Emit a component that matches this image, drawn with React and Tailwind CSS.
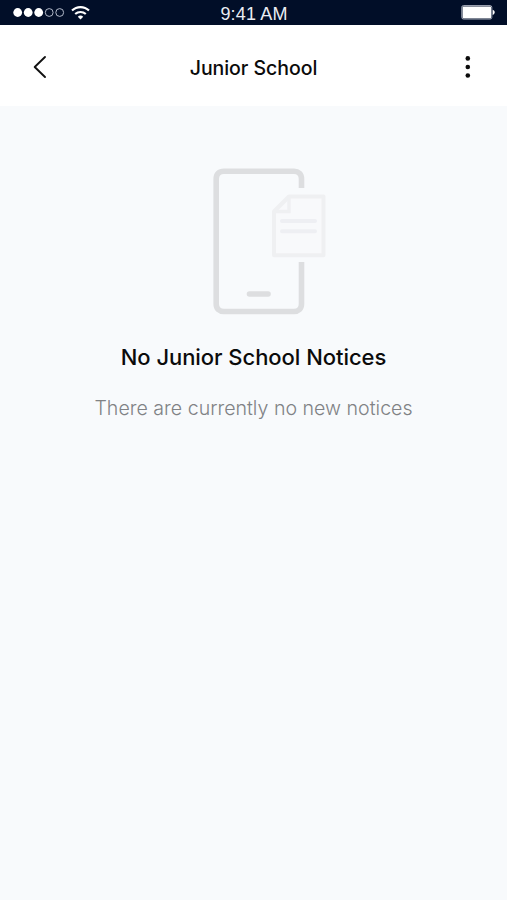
function SignalDots() {
  return (
    <svg width="52" height="11" viewBox="0 0 52 11" fill="white">
      <circle cx="4.7" cy="5.5" r="4.4" />
      <circle cx="15.2" cy="5.5" r="4.4" />
      <circle cx="25.7" cy="5.5" r="4.4" />
      <circle cx="36.2" cy="5.5" r="3.9" fill="none" stroke="#b3bac9" strokeWidth="1" />
      <circle cx="46.7" cy="5.5" r="3.9" fill="none" stroke="#b3bac9" strokeWidth="1" />
    </svg>
  )
}

function WifiIcon() {
  return (
    <svg width="19" height="14" viewBox="0 0 19 14" fill="none" stroke="white" strokeWidth="2.1">
      <path d="M1 4.6C5.8 -0.1 13.2 -0.1 18 4.6" />
      <path d="M4.2 8.1C7.2 5.2 11.8 5.2 14.8 8.1" />
      <path d="M9.5 13.4L6.8 10.7C8.3 9.2 10.7 9.2 12.2 10.7Z" fill="white" stroke="none" />
    </svg>
  )
}

function BatteryIcon() {
  return (
    <svg width="34" height="15" viewBox="0 0 34 15">
      <rect x="0.8" y="0.6" width="30" height="13.4" rx="1.6" fill="none" stroke="#a9afbd" strokeWidth="1" />
      <rect x="1.6" y="1.5" width="28.4" height="11.7" rx="0.5" fill="white" />
      <path d="M31.7 4.7C34.4 5.4 34.4 9.2 31.7 9.9Z" fill="white" />
    </svg>
  )
}

function StatusBar() {
  return (
    <div className="grid h-[25px] grid-cols-3 items-center bg-[#010e28] pr-3 pl-[13px]">
      <div className="flex items-center gap-[6px]">
        <SignalDots />
        <WifiIcon />
      </div>
      <span className="pt-[3px] text-center font-['Liberation_Sans',sans-serif] text-[18px] leading-[22px] tracking-[0.15px] text-[#e9ecf2]">
        9:41 AM
      </span>
      <div className="flex justify-end">
        <BatteryIcon />
      </div>
    </div>
  )
}

function Header({ title }) {
  return (
    <header className="flex h-[81px] items-center justify-between bg-white px-[31px] pt-[3px]">
      <button aria-label="Back" className="flex w-4 justify-start">
        <svg width="16" height="24" viewBox="0 0 16 24" fill="none" stroke="#111" strokeWidth="1.9" strokeLinecap="round" strokeLinejoin="round">
          <path d="M14 2L3.7 12L14 22" />
        </svg>
      </button>
      <h1 className="pt-px text-[19.5px] leading-7 font-medium tracking-[-0.05px] text-[#0b0b0b]">{title}</h1>
      <button aria-label="More" className="flex w-4 justify-center">
        <svg width="16" height="24" viewBox="0 0 16 24" fill="#0b0b0b">
          <circle cx="7.8" cy="3.4" r="2.3" />
          <circle cx="7.8" cy="12" r="2.3" />
          <circle cx="7.8" cy="20.5" r="2.3" />
        </svg>
      </button>
    </header>
  )
}

function EmptyIllustration() {
  return (
    <svg width="114" height="148" viewBox="0 0 114 148" fill="none">
      {/* phone outline, open where the page sits */}
      <g stroke="#dddee0" strokeWidth="5.6">
        <path d="M88.5 20V11C88.5 6 85.5 3.3 81 3.3H11C6 3.3 3.2 6 3.2 11V136C3.2 140.8 6 143.5 11 143.5H81C85.5 143.5 88.5 140.8 88.5 136V94" />
        <path d="M36.5 126H55" strokeLinecap="round" />
      </g>
      {/* page with folded corner */}
      <path d="M76 28.5H110.5V87.3H61V43.5Z" fill="#f8f9fb" stroke="#eff0f2" strokeWidth="4" strokeLinejoin="round" />
      <path d="M76 29V43.5H62" stroke="#eff0f2" strokeWidth="3.4" />
      <path d="M69 53H102M69 63.3H102" stroke="#eeeff3" strokeWidth="4" strokeLinecap="round" />
    </svg>
  )
}

export default function App() {
  return (
    <div className="flex min-h-screen flex-col bg-[#f8fafc] font-['Inter',sans-serif]">
      <StatusBar />
      <Header title="Junior School" />
      <main className="flex flex-1 flex-col items-center pt-[62px]">
        <div className="pl-8">
          <EmptyIllustration />
        </div>
        <h2 className="mt-[25px] text-[22px] leading-8 font-medium tracking-[-0.05px] text-[#0b0b0b]">No Junior School Notices</h2>
        <p className="mt-[21px] text-[19.6px] leading-7 font-light text-[#808285]">There are currently no new notices</p>
      </main>
    </div>
  )
}
